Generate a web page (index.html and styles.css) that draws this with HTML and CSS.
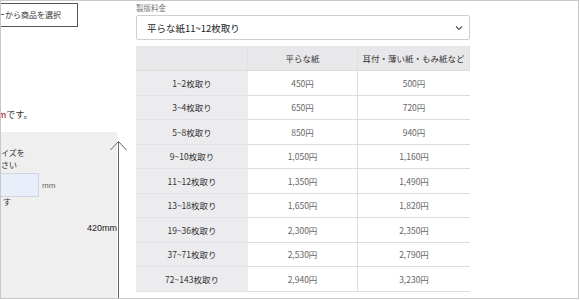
FILE: index.html
```html
<!DOCTYPE html>
<html lang="ja">
<head>
<meta charset="utf-8">
<link rel="stylesheet" href="styles.css">
</head>
<body>
<div class="frame">
  <div class="left">
    <div class="pick-btn">ーから商品を選択</div>
    <p class="note"><span class="red">m</span>です。</p>
    <div class="panel">
      <div class="panel-text">サイズを<br>ださい</div>
      <div class="size-row">
        <div class="size-input"></div>
        <span class="unit">mm</span>
      </div>
      <div class="panel-text small">す</div>
      <div class="dim">420mm</div>
    </div>
    <svg class="arrow" width="18" height="160" viewBox="0 0 18 160">
      <polyline points="0.5,10 8.5,1.5 16.5,10" fill="none" stroke="#666" stroke-width="1"/>
      <line x1="8.5" y1="1.5" x2="8.5" y2="160" stroke="#666" stroke-width="1"/>
    </svg>
  </div>
  <div class="right">
    <div class="label">製版料金</div>
    <div class="select">
      <span>平らな紙11~12枚取り</span>
      <svg class="chev" width="8" height="6" viewBox="0 0 8 6"><polyline points="1,1.5 4,4.5 7,1.5" fill="none" stroke="#555" stroke-width="1.1"/></svg>
    </div>
    <div class="price-table">
      <div class="cell head"></div>
      <div class="cell head">平らな紙</div>
      <div class="cell head">耳付・薄い紙・もみ紙など</div>

      <div class="cell rowhead">1~2枚取り</div><div class="cell val">450円</div><div class="cell val">500円</div>
      <div class="cell rowhead">3~4枚取り</div><div class="cell val">650円</div><div class="cell val">720円</div>
      <div class="cell rowhead">5~8枚取り</div><div class="cell val">850円</div><div class="cell val">940円</div>
      <div class="cell rowhead">9~10枚取り</div><div class="cell val">1,050円</div><div class="cell val">1,160円</div>
      <div class="cell rowhead">11~12枚取り</div><div class="cell val">1,350円</div><div class="cell val">1,490円</div>
      <div class="cell rowhead">13~18枚取り</div><div class="cell val">1,650円</div><div class="cell val">1,820円</div>
      <div class="cell rowhead">19~36枚取り</div><div class="cell val">2,300円</div><div class="cell val">2,350円</div>
      <div class="cell rowhead">37~71枚取り</div><div class="cell val">2,530円</div><div class="cell val">2,790円</div>
      <div class="cell rowhead">72~143枚取り</div><div class="cell val">2,940円</div><div class="cell val">3,230円</div>
    </div>
  </div>
</div>
</body>
</html>
```
FILE: styles.css
```css
html, body {
  margin: 0;
  padding: 0;
  background: #fff;
}
body {
  font-family: "Noto Sans CJK JP", "Noto Sans", sans-serif;
  color: #333;
}
.frame {
  width: 579px;
  height: 299px;
  box-sizing: border-box;
  border: 1px solid #c8c8c8;
  display: flex;
  overflow: hidden;
}
.left {
  position: relative;
  width: 118px;
  flex: none;
  display: flex;
  flex-direction: column;
}
.pick-btn {
  margin-top: 2px;
  margin-left: -24px;
  width: 101px;
  height: 24px;
  box-sizing: border-box;
  border: 1px solid #555;
  padding-left: 19px;
  font-size: 8px;
  line-height: 22px;
  color: #333;
  white-space: nowrap;
}
.note {
  margin: 82px 0 0 -3px;
  font-size: 9px;
  line-height: 12px;
  color: #333;
  white-space: nowrap;
}
.red {
  color: #b3001e;
}
.panel {
  margin-top: 11px;
  width: 116px;
  flex: 1;
  background: #efefef;
  display: flex;
  flex-direction: column;
  padding-top: 15px;
  box-sizing: border-box;
}
.panel-text {
  margin-left: -8px;
  font-size: 8px;
  line-height: 12px;
  color: #333;
  white-space: nowrap;
}
.panel-text.small {
  margin-left: 2px;
  line-height: 9px;
}
.size-row {
  display: flex;
  align-items: center;
  gap: 3px;
  margin-top: 2px;
}
.size-input {
  width: 39px;
  height: 24px;
  margin-left: -1px;
  box-sizing: border-box;
  background: #e8effb;
  border: 1px solid #cdd5e2;
}
.unit {
  font-size: 8px;
  color: #666;
  font-family: "Liberation Sans", sans-serif;
}
.dim {
  margin-top: 17px;
  text-align: right;
  font-family: "Liberation Sans", sans-serif;
  font-size: 9px;
  color: #222;
}
.arrow {
  position: absolute;
  left: 109px;
  top: 139px;
}
.right {
  margin-left: 17px;
  width: 334px;
  flex: none;
  display: flex;
  flex-direction: column;
}
.label {
  margin-top: 2px;
  font-size: 7.5px;
  line-height: 10px;
  color: #777;
}
.select {
  margin-top: 2px;
  height: 25px;
  box-sizing: border-box;
  border: 1px solid #cfcfcf;
  border-radius: 2px;
  display: flex;
  align-items: center;
  justify-content: space-between;
  padding: 0 6px 0 10px;
  font-size: 9.5px;
  color: #222;
}
.chev {
  margin-top: 1px;
}
.price-table {
  margin-top: 6px;
  display: grid;
  grid-template-columns: 112px 110px 112px;
  grid-template-rows: 25px;
  grid-auto-rows: 24.5px;
  border-right: 1px solid #d6d6d6;
  box-sizing: border-box;
}
.cell {
  display: flex;
  align-items: center;
  justify-content: center;
  font-size: 8.5px;
  border-bottom: 1px solid #dcdcdc;
  box-sizing: border-box;
}
.head {
  background: #e8e8ea;
  color: #333;
  border-right: 1px solid #e0e0e0;
}
.rowhead {
  background: #ececee;
  color: #333;
  border-bottom-color: #e2e2e4;
}
.val {
  background: #fff;
  color: #666;
  border-right: 1px solid #dcdcdc;
}
.val:nth-child(3n) {
  border-right: none;
}
```
